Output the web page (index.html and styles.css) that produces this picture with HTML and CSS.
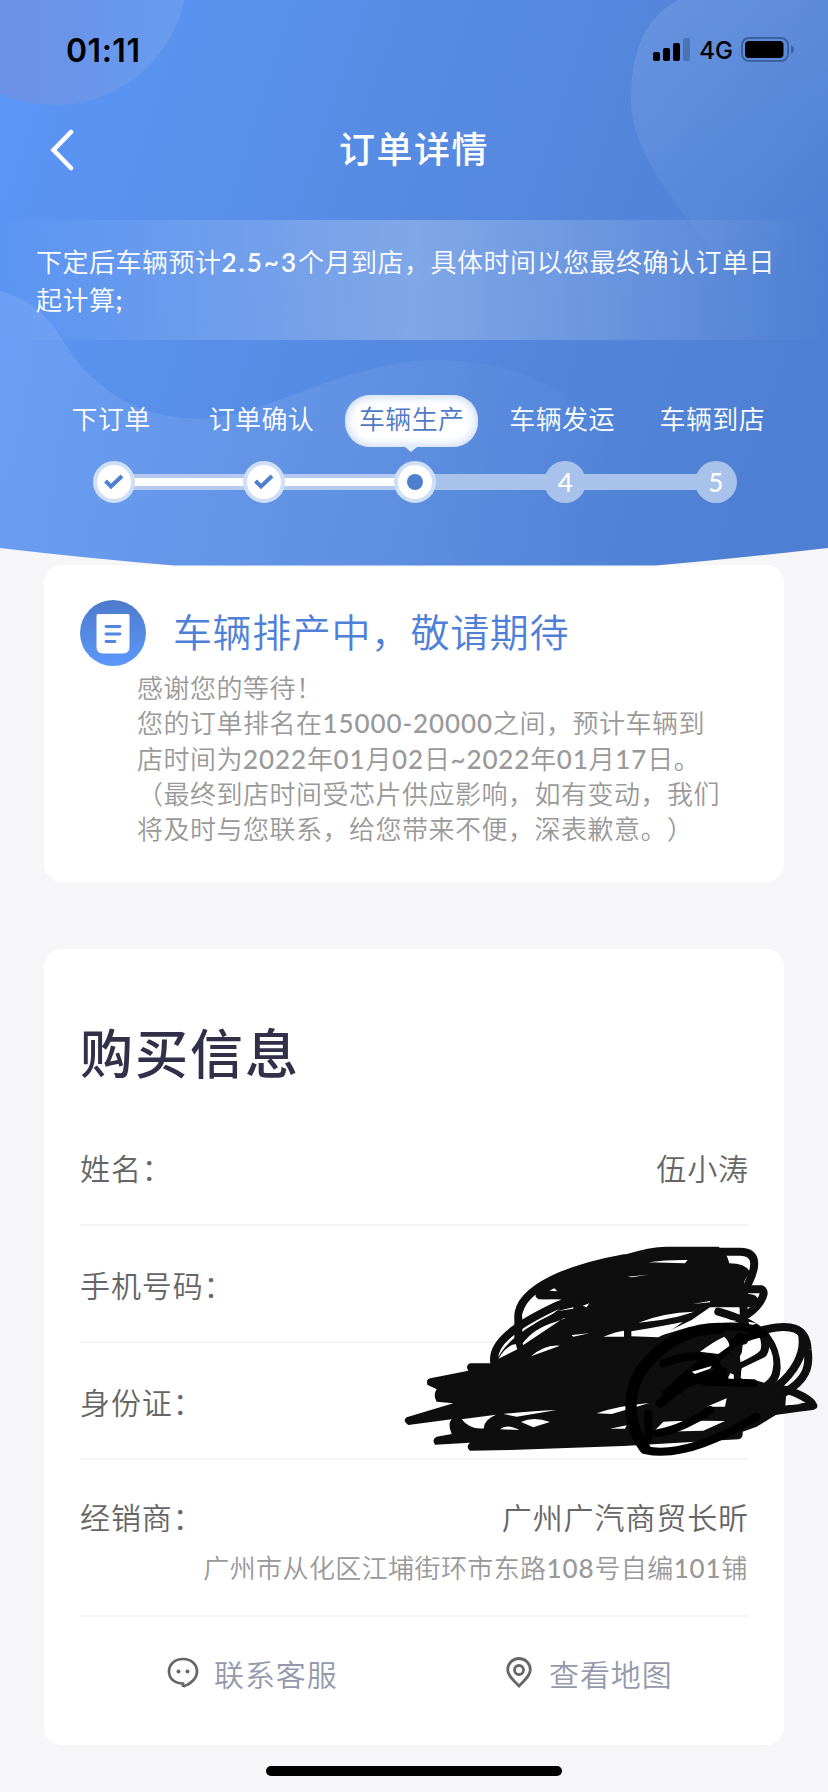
FILE: index.html
```html
<!DOCTYPE html>
<html lang="zh-CN">
<head>
<meta charset="utf-8">
<title>订单详情</title>
<link rel="stylesheet" href="styles.css">
</head>
<body>
<div class="screen">
  <header class="hero">
    <svg class="hero-art" viewBox="0 0 828 566" preserveAspectRatio="none" aria-hidden="true">
      <defs>
        <linearGradient id="base" gradientUnits="userSpaceOnUse" x1="0" y1="180" x2="800" y2="450">
          <stop offset="0" stop-color="#5b95f5"/><stop offset=".5" stop-color="#568ae0"/><stop offset="1" stop-color="#4e7fd2"/>
        </linearGradient>
        <linearGradient id="orb" x1="0" y1="0" x2="1" y2="0">
          <stop offset=".2" stop-color="#6a8fe4"/><stop offset="1" stop-color="#689cef"/>
        </linearGradient>
        <linearGradient id="blob" gradientUnits="userSpaceOnUse" x1="640" y1="40" x2="790" y2="260">
          <stop offset="0" stop-color="#fff" stop-opacity=".1"/><stop offset="1" stop-color="#fff" stop-opacity="0"/>
        </linearGradient>
        <linearGradient id="wave" gradientUnits="userSpaceOnUse" x1="0" y1="400" x2="620" y2="460">
          <stop offset="0" stop-color="#fff" stop-opacity=".1"/><stop offset=".6" stop-color="#fff" stop-opacity=".06"/><stop offset="1" stop-color="#fff" stop-opacity="0"/>
        </linearGradient>
      </defs>
      <path d="M0 0H828V548Q740 558 656 565.500H174Q85 558 0 548Z" fill="url(#base)"/>
      <circle cx="55" cy="-27" r="132" fill="url(#orb)"/>
      <path d="M678 0C640 20 631 60 631 102C632 150 670 195 706 243C740 280 800 300 828 380V0Z" fill="url(#blob)"/>
      <path d="M0 291C50 305 60 340 76 360C110 398 140 418 205 419C270 412 330 372 414 361C480 355 540 375 570 400C640 450 680 540 720 560L656 565.500H174Q85 558 0 548Z" fill="url(#wave)"/>
    </svg>
    <div class="status">
      <span class="clock">01:11</span>
      <span class="status-right">
        <svg width="38" height="24" viewBox="0 0 38 24"><rect x="0" y="14" width="7" height="9" rx="2"/><rect x="10" y="10" width="7" height="13" rx="2"/><rect x="20" y="5" width="7" height="18" rx="2"/><rect x="30" y="0" width="7" height="23" rx="2" fill="#4a74b4"/></svg>
        <span class="net">4G</span>
        <svg width="54" height="26" viewBox="0 0 54 26"><rect x="1" y="1" width="46" height="23" rx="7" fill="none" stroke="#3c62a4" stroke-width="2"/><rect x="4" y="4" width="38.500" height="17" rx="4"/><path d="M50 8.500Q53 9.500 53 12.500T50 16.500Z" fill="#3c62a4"/></svg>
      </span>
    </div>
    <nav class="nav">
      <svg class="back" width="24" height="42" viewBox="0 0 24 42"><path d="M21 3L3.500 21L21 39" fill="none" stroke="#fff" stroke-width="4.600" stroke-linecap="round"/></svg>
      <h1 class="nav-title">订单详情</h1>
    </nav>
    <p class="notice">下定后车辆预计<b>2.5~3</b>个月到店，具体时间以您最终确认订单日<br>起计算<b>;</b></p>
    <ol class="labels">
      <li>下订单</li><li>订单确认</li><li><span class="bubble">车辆生产</span></li><li>车辆发运</li><li>车辆到店</li>
    </ol>
    <div class="track">
      <span class="dot done"><svg width="20" height="16" viewBox="0 0 20 16"><path d="M1.500 7L7 12.500L18 2" fill="none" stroke="#4f7fcf" stroke-width="4"/></svg></span>
      <span class="link full"></span>
      <span class="dot done"><svg width="20" height="16" viewBox="0 0 20 16"><path d="M1.500 7L7 12.500L18 2" fill="none" stroke="#4f7fcf" stroke-width="4"/></svg></span>
      <span class="link full"></span>
      <span class="dot done"><i class="core"></i></span>
      <span class="link"></span>
      <span class="dot">4</span>
      <span class="link"></span>
      <span class="dot">5</span>
    </div>
  </header>

  <section class="card state">
    <div class="state-head">
      <svg width="66" height="66" viewBox="0 0 66 66"><defs><linearGradient id="disc" x1="0" y1="0" x2="0" y2="1"><stop offset="0" stop-color="#4d7bcb"/><stop offset="1" stop-color="#5c98fb"/></linearGradient></defs><circle cx="33" cy="33" r="33" fill="url(#disc)"/><path d="M18 14H48Q49.500 14 49.500 16V47Q49.500 53.500 43 53.500H23Q16.500 53.500 16.500 47V16Q16.500 14 18 14Z" fill="#fff"/><path d="M26 26.500H40M26 34H40M26 41.500H35" stroke="#5386de" stroke-width="2.800" stroke-linecap="round"/></svg>
      <h2 class="state-title">车辆排产中，敬请期待</h2>
    </div>
    <p class="state-text">感谢您的等待！<br>您的订单排名在<b>15000-20000</b>之间，预计车辆到<br>店时间为<b>2022</b>年<b>01</b>月<b>02</b>日<b>~2022</b>年<b>01</b>月<b>17</b>日。<br>（最终到店时间受芯片供应影响，如有变动，我们<br>将及时与您联系，给您带来不便，深表歉意。）</p>
  </section>

  <section class="card info">
    <h2 class="info-title">购买信息</h2>
    <div class="row"><span>姓名：</span><span class="value">伍小涛</span></div>
    <div class="row"><span>手机号码：</span></div>
    <div class="row"><span>身份证：</span></div>
    <div class="row dealer"><span>经销商：</span><span class="value">广州广汽商贸长昕</span><small>广州市从化区江埔街环市东路<b>108</b>号自编<b>101</b>铺</small></div>
    <div class="actions">
      <span class="action"><svg width="32" height="32" viewBox="0 0 32 32"><path d="M16 30V26.500C8 26.500 2 22 2 14.500C2 7 8 2 16 2S30 7 30 14.500C30 21 24 27 16.500 29.500" fill="none" stroke="#66666b" stroke-width="2.700"/><circle cx="11.500" cy="14.500" r="2" fill="#66666b"/><circle cx="20.500" cy="14.500" r="2" fill="#66666b"/></svg>联系客服</span>
      <span class="action map"><svg width="26" height="32" viewBox="0 0 26 32"><path d="M13 29C8 23.500 1.700 19 1.700 12.800A11.300 11.300 0 0 1 24.300 12.800C24.300 19 18 23.500 13 29Z" fill="none" stroke="#66666b" stroke-width="2.800"/><circle cx="13" cy="13" r="4.500" fill="none" stroke="#66666b" stroke-width="2.800"/></svg>查看地图</span>
    </div>
  </section>

  <svg class="scribble" viewBox="0 0 1314 750" aria-hidden="true">
    <path fill="#0e0e0e" d="M437 230L437 205Q560 135 700 105Q780 80 830 80L985 80Q1010 95 1018 130Q1065 130 1080 155L1062 185L1075 222Q1104 222 1104 242L1085 262L960 262L905 300L800 350L900 320L1100 315L1060 390L1010 480L1095 480L1160 500L1188 530L1185 568L1100 620L1058 635Q1060 655 1045 658L700 678L360 690L240 692Q226 680 240 668L135 674Q124 658 140 650L185 642Q172 610 185 598L55 615Q36 602 50 592L190 550L140 545Q128 525 140 508L112 494Q106 476 125 474L235 452Q225 436 240 430L302 430L380 370L540 240L445 238Z"/>
    <g fill="none" stroke="#0e0e0e" stroke-width="24" stroke-linecap="round" stroke-linejoin="round">
      <path d="M385 370V300C375 200 560 140 700 115"/>
      <path d="M313 430C300 360 400 300 560 230M330 430C350 370 450 300 600 250"/>
      <path d="M990 95H1050C1110 95 1095 150 1075 190"/>
      <path d="M1070 208H1115C1135 220 1100 270 1060 290"/>
      <path d="M1060 240L1062 310M985 275C1110 310 1175 370 1160 450C1155 490 1120 510 1080 510"/>
      <path d="M1120 330C1200 310 1250 320 1253 390C1260 440 1250 480 1180 520M1235 340C1250 400 1210 460 1160 500"/>
      <path d="M1120 345C1140 410 1110 410 1030 450M1010 330C1040 380 1040 430 1045 490"/>
      <path d="M1165 505C1230 515 1265 545 1270 557C1210 565 1120 580 1010 590"/>
    </g>
    <g fill="#fff">
      <path d="M396 290C400 250 450 235 515 239C460 255 430 270 396 290Z"/>
      <path d="M775 127Q830 119 893 120L885 130Z"/>
      <path d="M712 170L775 164L725 172Z"/>
      <path d="M478 212L493 205L502 214Z"/>
      <path d="M745 308Q820 278 912 275Q850 298 745 308Z"/>
      <path d="M724 334Q820 318 878 306Q840 335 805 352L724 349Z"/>
      <path d="M640 350Q680 334 702 332V350Z"/>
      <path d="M545 345L598 340L550 350ZM908 252L960 243L960 247ZM500 274L550 262L550 266ZM578 257L598 250L590 262ZM325 416Q350 375 377 372L382 388ZM398 370Q430 325 498 305Q540 290 520 295L400 375ZM423 409Q465 372 510 377Z"/>
      <path d="M215 598L318 584Q280 600 282 625Q240 630 215 598ZM330 628Q350 610 388 630ZM393 606Q430 588 480 606Q450 615 430 622ZM340 582Q430 572 500 570L380 590ZM620 580Q680 558 778 549L665 582Z"/>
      <path d="M820 605Q900 600 1005 603L940 632L790 636ZM660 626L710 616L705 626Z"/>
      <path d="M1010 300L1038 302L1020 310ZM1075 305L1100 310L1080 318Z"/>
      <path d="M1058 375L1108 360Q1115 390 1055 402ZM1052 475L1055 445L1137 405Q1150 445 1125 487L1095 480ZM1140 345Q1200 335 1225 350Q1220 410 1170 470Q1180 400 1140 345ZM950 560L1010 535L1005 560ZM1195 543L1235 552L1190 556Z"/>
    </g>
    <g fill="none" stroke="#000" stroke-width="24" stroke-linecap="round">
      <path stroke-width="34" d="M990 325C900 325 840 360 790 410C700 490 710 610 765 685"/>
      <path d="M1100 330C990 300 860 340 790 410M765 690C850 710 970 670 1100 590"/>
      <path d="M810 550C880 500 970 430 1050 350M820 430C900 400 970 390 1005 480M775 580V660M830 520C930 420 1040 350 1120 340M860 500L1000 455M940 485L1090 490M800 640C860 630 920 600 960 570"/>
    </g>
    <g fill="#fff">
      <path d="M905 455L965 438L960 446L915 462ZM930 395Q970 365 1003 350Q1018 365 1018 378L985 402Z"/>
    </g>
  </svg>
  <div class="home-bar"></div>
</div>
</body>
</html>
```
FILE: styles.css
```css
* { box-sizing: border-box; margin: 0; padding: 0; }
body {
  width: 828px;
  background: #f6f6f9;
  font-family: Lato, "Noto Sans CJK SC", sans-serif;
  font-weight: 350;
  text-spacing-trim: space-all;
}
.screen { position: relative; height: 1792px; overflow: hidden; display: flex; flex-direction: column; }

.hero { position: relative; height: 565px; display: flex; flex-direction: column; color: #fff; flex: none; }
.hero > * { position: relative; }
.hero .hero-art { position: absolute; left: 0; top: 0; width: 828px; height: 566px; }

.status { height: 100px; display: flex; justify-content: space-between; align-items: center; padding: 0 33px 0 66px; color: #000; font-family: Inter, sans-serif; }
.clock { font-size: 32px; font-weight: 600; letter-spacing: .500px; }
.status-right { display: flex; align-items: center; }
.net { font-size: 24px; font-weight: 500; margin: 0 8px; line-height: 24px; padding-top: 2px; }

.nav { height: 120px; display: flex; justify-content: center; padding-bottom: 26px; align-items: center; }
.back { position: absolute; left: 50px; top: 29px; }
.nav-title { font-size: 36px; font-weight: 500; letter-spacing: 1.500px; }

.notice {
  height: 120px;
  padding: 23px 0 0 36px;
  font-size: 26px;
  letter-spacing: .500px;
  line-height: 38px;
  white-space: nowrap;
  background: linear-gradient(90deg, rgba(255,255,255,0), rgba(255,255,255,.25) 50%, rgba(255,255,255,0));
}
.notice b { font-weight: 600; letter-spacing: 2px; }

.labels { list-style: none; display: grid; grid-template-columns: repeat(5, 150.300px); margin: 55px 0 0 36px; height: 52px; line-height: 49px; font-size: 26px; letter-spacing: .400px; text-align: center; }
.bubble { position: relative; display: block; width: 133px; height: 52px; margin: 0 auto; line-height: 49px; border-radius: 25px; background: #fff; color: #5079c4; box-shadow: inset 0 0 12px #b4cbf2; }
.bubble::after { content: ""; position: absolute; left: 60px; bottom: -5px; border: solid transparent; border-width: 5px 6px 0; border-top-color: #e3ebfa; }

.track { display: flex; align-items: center; margin: 14px 0 0 92.500px; }
.dot { width: 42px; height: 42px; border-radius: 50%; background: #a9c2eb; display: flex; align-items: center; justify-content: center; font-size: 26px; font-weight: 500; flex: none; z-index: 1; }
.dot.done { background: #fff; border: 4px solid #cfdff7; }
.core { width: 16px; height: 16px; border-radius: 50%; background: #4f7fcf; }
.link { width: 112.600px; height: 16px; margin: 0 -2px; background: #a9c2eb; }
.link.full { background: #fff; border: solid #b4caee; border-width: 4px 0; }

.card { width: 740px; margin-left: 44px; background: #fff; border-radius: 18px; flex: none; }
.state { height: 317px; padding: 35px 36px 0; }
.state-head { display: flex; align-items: center; gap: 27px; height: 66px; }
.state-title { font-size: 39px; font-weight: 350; letter-spacing: .600px; color: #4f80d8; line-height: 60px; margin-top: -2px; }
.state-text { padding: 5px 0 0 57px; font-size: 26px; letter-spacing: .500px; line-height: 35.300px; color: #999; white-space: nowrap; }
.state-text b, .dealer b { font-weight: 500; letter-spacing: .900px; }

.info { height: 796px; margin-top: 67px; padding: 66px 36px 0; }
.info-title { font-size: 53px; font-weight: 500; letter-spacing: 2px; color: #322f48; line-height: 78px; height: 94px; }
.row { height: 117px; display: flex; flex-wrap: wrap; justify-content: space-between; align-items: center; border-bottom: 2px solid #f4f4f6; font-size: 30px; letter-spacing: .900px; color: #666; }
.row .value { margin-right: -1px; }
.dealer { height: 157px; align-content: flex-start; line-height: 44px; padding-top: 35px; }
.dealer small { width: 100%; text-align: right; font-size: 26px; letter-spacing: .400px; color: #999; line-height: 40px; padding-top: 9px; }
.actions { display: flex; height: 112px; align-items: center; padding-left: 87px; font-size: 30px; letter-spacing: .900px; color: #9499ad; }
.action { display: flex; align-items: center; gap: 15px; width: 339px; }
.action.map { width: auto; gap: 17px; }

.scribble { position: absolute; left: 390px; top: 1220px; width: 438px; height: 250px; }
.home-bar { position: absolute; left: 266px; top: 1766px; width: 296px; height: 10px; border-radius: 5px; background: #000; }
```
